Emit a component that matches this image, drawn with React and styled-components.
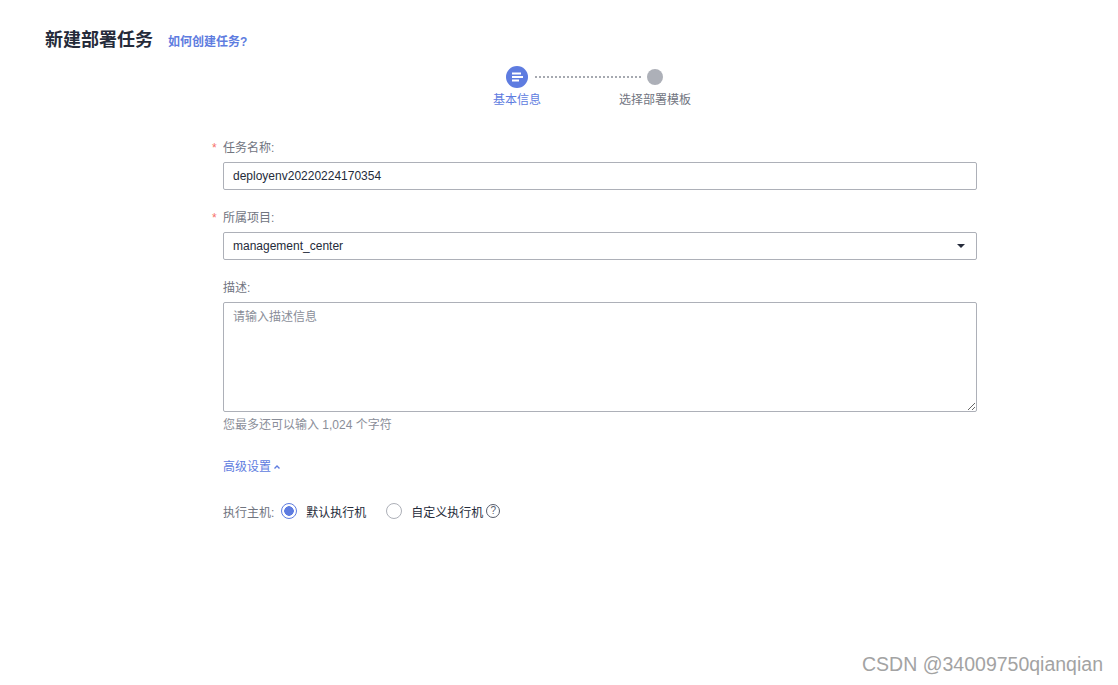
import React from 'react'
import styled, { createGlobalStyle } from 'styled-components'

const GlobalStyle = createGlobalStyle`
  html, body { margin: 0; padding: 0; background: #fff; }
  body {
    font-family: "Liberation Sans", "Noto Sans CJK SC", sans-serif;
    font-size: 12px;
    color: #252b3a;
  }
`;

const Page = styled.div`
  position: relative;
  width: 1118px;
  height: 685px;
  overflow: hidden;
`;

const Header = styled.div`
  display: flex;
  align-items: baseline;
  gap: 15px;
  padding: 28px 0 0 45px;
  h1 {
    margin: 0;
    font-size: 18px;
    line-height: 24px;
    font-weight: 700;
    color: #252b3a;
  }
  a {
    font-size: 12px;
    font-weight: 700;
    color: #5e7ce0;
    text-decoration: none;
  }
`;

const Steps = styled.div`
  display: flex;
  margin: 14px 0 0 477px;
`;

const StepItem = styled.div`
  width: 80px;
  display: flex;
  flex-direction: column;
  align-items: center;
  .label {
    margin-top: 3px;
    line-height: 18px;
    font-size: 12px;
    color: ${p => (p.active ? '#5e7ce0' : '#71757f')};
  }
`;

const IconSlot = styled.div`
  height: 22px;
  display: flex;
  align-items: center;
  justify-content: center;
`;

const Dot = styled.div`
  width: 16px;
  height: 16px;
  border-radius: 50%;
  background: #adb0b8;
`;

const Connector = styled.div`
  width: 106px;
  margin: 10px -26px 0 -22px;
  height: 0;
  border-top: 2px dotted #a6a9b0;
  align-self: flex-start;
`;

const Form = styled.div`
  width: 754px;
  margin: 30px 0 0 223px;
  display: flex;
  flex-direction: column;
`;

const Field = styled.div`
  display: flex;
  flex-direction: column;
  margin-bottom: ${p => (p.last ? '0' : '19px')};
`;

const Label = styled.label`
  display: flex;
  line-height: 18px;
  color: #71757f;
  margin-bottom: 5px;
  .req {
    width: 11px;
    margin-left: -11px;
    color: #f66f6a;
  }
`;

const Input = styled.input`
  box-sizing: border-box;
  height: 28px;
  width: 100%;
  border: 1px solid #adb0b8;
  border-radius: 2px;
  padding: 0 9px;
  font-family: inherit;
  font-size: 12px;
  color: #252b3a;
  outline: none;
`;

const Select = styled.div`
  box-sizing: border-box;
  height: 28px;
  border: 1px solid #adb0b8;
  border-radius: 2px;
  padding: 0 11px 0 9px;
  display: flex;
  align-items: center;
  justify-content: space-between;
  color: #252b3a;
  .caret {
    width: 0;
    height: 0;
    border-left: 4px solid transparent;
    border-right: 4px solid transparent;
    border-top: 4px solid #252b3a;
  }
`;

const TextArea = styled.textarea`
  box-sizing: border-box;
  display: block;
  width: 100%;
  height: 110px;
  border: 1px solid #adb0b8;
  border-radius: 2px;
  padding: 5px 9px;
  font-family: inherit;
  font-size: 12px;
  line-height: 18px;
  color: #252b3a;
  outline: none;
  &::placeholder { color: #8a8e99; }
`;

const Hint = styled.div`
  margin-top: 4px;
  line-height: 18px;
  color: #8a8e99;
`;

const Advanced = styled.a`
  display: flex;
  align-items: center;
  gap: 2px;
  margin-top: 24px;
  line-height: 18px;
  color: #5e7ce0;
  cursor: pointer;
`;

const RadioRow = styled.div`
  display: flex;
  align-items: center;
  margin-top: 25px;
  height: 20px;
  .title {
    color: #71757f;
    margin-right: 7px;
  }
`;

const Radio = styled.label`
  display: flex;
  align-items: center;
  gap: 9px;
  margin-right: 20px;
  color: #252b3a;
  &::before {
    content: '';
    box-sizing: border-box;
    width: 16px;
    height: 16px;
    border-radius: 50%;
    border: 1px solid ${p => (p.checked ? '#5e7ce0' : '#adb0b8')};
    background: ${p => (p.checked ? 'radial-gradient(circle, #5e7ce0 0 4.5px, #fff 5px)' : '#fff')};
  }
  .text {
    display: flex;
    align-items: center;
  }
`;

const Help = styled.span`
  display: inline-flex;
  align-items: center;
  justify-content: center;
  box-sizing: border-box;
  width: 14px;
  height: 14px;
  margin-left: 3px;
  border: 1px solid #575d6c;
  border-radius: 50%;
  font-size: 10px;
  line-height: 1;
  color: #575d6c;
`;

const Watermark = styled.div`
  position: absolute;
  right: 15px;
  bottom: 9px;
  font-family: "Liberation Sans", sans-serif;
  font-size: 19.5px;
  color: #a3a3a3;
`;

function StepIcon() {
  return (
    <svg width="22" height="22" viewBox="0 0 22 22">
      <circle cx="11" cy="11" r="11" fill="#5e7ce0" />
      <rect x="6" y="6.5" width="9" height="2" fill="#fff" />
      <rect x="6" y="10" width="11" height="2" fill="#fff" />
      <rect x="6" y="13.5" width="7" height="2" fill="#fff" />
    </svg>
  );
}

function Caret() {
  return (
    <svg width="8" height="6" viewBox="0 0 8 6">
      <path d="M1.5 4.5 L4 2 L6.5 4.5" fill="none" stroke="#5e7ce0" strokeWidth="1.4" />
    </svg>
  );
}

export default function App() {
  return (
    <Page>
      <GlobalStyle />
      <Header>
        <h1>新建部署任务</h1>
        <a href="#">如何创建任务?</a>
      </Header>

      <Steps>
        <StepItem active>
          <IconSlot><StepIcon /></IconSlot>
          <span className="label">基本信息</span>
        </StepItem>
        <Connector />
        <StepItem>
          <IconSlot><Dot /></IconSlot>
          <span className="label">选择部署模板</span>
        </StepItem>
      </Steps>

      <Form>
        <Field>
          <Label><span className="req">*</span>任务名称:</Label>
          <Input defaultValue="deployenv20220224170354" />
        </Field>
        <Field>
          <Label><span className="req">*</span>所属项目:</Label>
          <Select>
            <span>management_center</span>
            <span className="caret" />
          </Select>
        </Field>
        <Field last>
          <Label>描述:</Label>
          <TextArea placeholder="请输入描述信息" />
          <Hint>您最多还可以输入 1,024 个字符</Hint>
        </Field>
        <Advanced>高级设置<Caret /></Advanced>
        <RadioRow>
          <span className="title">执行主机:</span>
          <Radio checked><span className="text">默认执行机</span></Radio>
          <Radio><span className="text">自定义执行机<Help>?</Help></span></Radio>
        </RadioRow>
      </Form>

      <Watermark>CSDN @34009750qianqian</Watermark>
    </Page>
  );
}
